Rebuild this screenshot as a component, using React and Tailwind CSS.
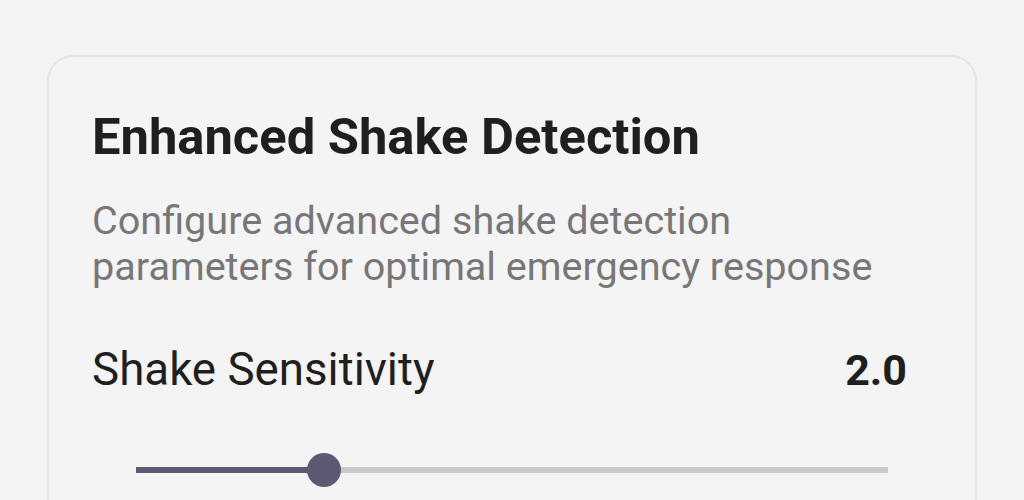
export default function App() {
    const value = 2.0;
    const min = 1.0;
    const max = 5.0;
    const pct = ((value - min) / (max - min)) * 100;

    return (
        <div className="w-[1024px] h-[500px] overflow-hidden bg-[#f4f4f4] pt-[55px] pl-[47px] pr-[47px] font-['Roboto',sans-serif]">
            <div className="h-[500px] rounded-[26px] border-2 border-[#e4e4e4] bg-[#f4f4f4] pt-[50px] pl-[43px] pr-[68px]">
                <h2 className="text-[50.7px] leading-[60px] font-bold text-[#1f1f1f]">
                    Enhanced Shake Detection
                </h2>
                <p className="mt-[31px] text-[39.6px] leading-[46px] text-[#777777]">
                    Configure advanced shake detection<br />
                    parameters for optimal emergency response
                </p>
                <div className="mt-[53px] flex items-center justify-between h-[54px]">
                    <span className="text-[45.7px] leading-[54px] text-[#1f1f1f]">Shake Sensitivity</span>
                    <span className="text-[43px] leading-[54px] font-bold text-[#1f1f1f]">2.0</span>
                </div>
                <div className="mt-[56px] ml-[44px] mr-[19px] relative h-[34px] flex items-center">
                    <div className="w-full h-[6px] bg-[#c9c9c9]" />
                    <div className="absolute left-0 h-[6px] bg-[#5f5875]" style={{ width: `${pct}%` }} />
                    <div
                        className="absolute w-[34px] h-[34px] rounded-full bg-[#5f5875] -translate-x-1/2"
                        style={{ left: `${pct}%` }}
                    />
                </div>
            </div>
        </div>
    );
}
